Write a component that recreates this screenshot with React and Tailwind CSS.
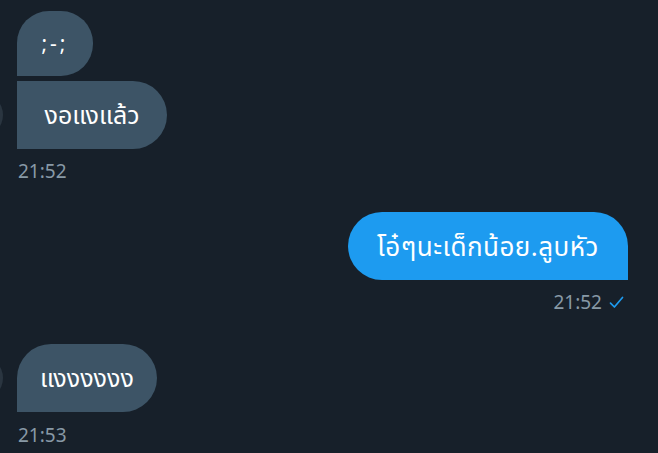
import React from 'react';

const font = { fontFamily: '"Noto Sans", "Noto Sans Thai", "Liberation Sans", sans-serif' };

const Avatar = () => (
  <div className="w-[44px] h-[44px] -ml-[41px] mr-[14px] rounded-full bg-[#2a3540] shrink-0 self-center" />
);

const Time = ({ children, right, check }) => (
  <div
    className={`flex items-center gap-[7px] text-[19px] leading-none text-[#8899a6] ${right ? 'justify-end pr-[34px]' : 'pl-[18px]'}`}
  >
    <span>{children}</span>
    {check && (
      <svg width="15" height="13" viewBox="0 0 15 13" fill="none">
        <path d="M1.5 7.2 L5.4 11 L13.5 1.5" stroke="#1d9bf0" strokeWidth="1.7" strokeLinecap="round" strokeLinejoin="round" />
      </svg>
    )}
  </div>
);

export default function App() {
  return (
    <div className="w-[658px] h-[453px] bg-[#17202a] overflow-hidden text-white" style={font}>
      <div className="pt-[11px] flex flex-col">
        <div className="flex pl-[17px]">
          <div className="h-[65px] w-[76px] bg-[#3d5466] rounded-t-[32px] rounded-br-[32px] flex items-center justify-center text-[21px] tracking-[3px]">
            ;-;
          </div>
        </div>
        <div className="flex items-center mt-[5px]">
          <Avatar />
          <div className="h-[68px] w-[150px] bg-[#3d5466] rounded-r-[34px] flex items-center justify-center text-[25px]">
            งอแงแล้ว
          </div>
        </div>
        <div className="mt-[13px]">
          <Time>21:52</Time>
        </div>
        <div className="flex justify-end pr-[30px] mt-[31px]">
          <div className="h-[68px] w-[280px] bg-[#1d9bf0] rounded-t-[34px] rounded-bl-[34px] flex items-center justify-center text-[26px] tracking-[0.5px]">
            โอ๋ๆนะเด็กน้อย.ลูบหัว
          </div>
        </div>
        <div className="mt-[13px]">
          <Time right check>21:52</Time>
        </div>
        <div className="flex items-center mt-[32px]">
          <Avatar />
          <div className="h-[68px] w-[140px] bg-[#3d5466] rounded-t-[34px] rounded-br-[34px] flex items-center justify-center text-[25px]">
            แงงงงงง
          </div>
        </div>
        <div className="mt-[14px]">
          <Time>21:53</Time>
        </div>
      </div>
    </div>
  );
}
